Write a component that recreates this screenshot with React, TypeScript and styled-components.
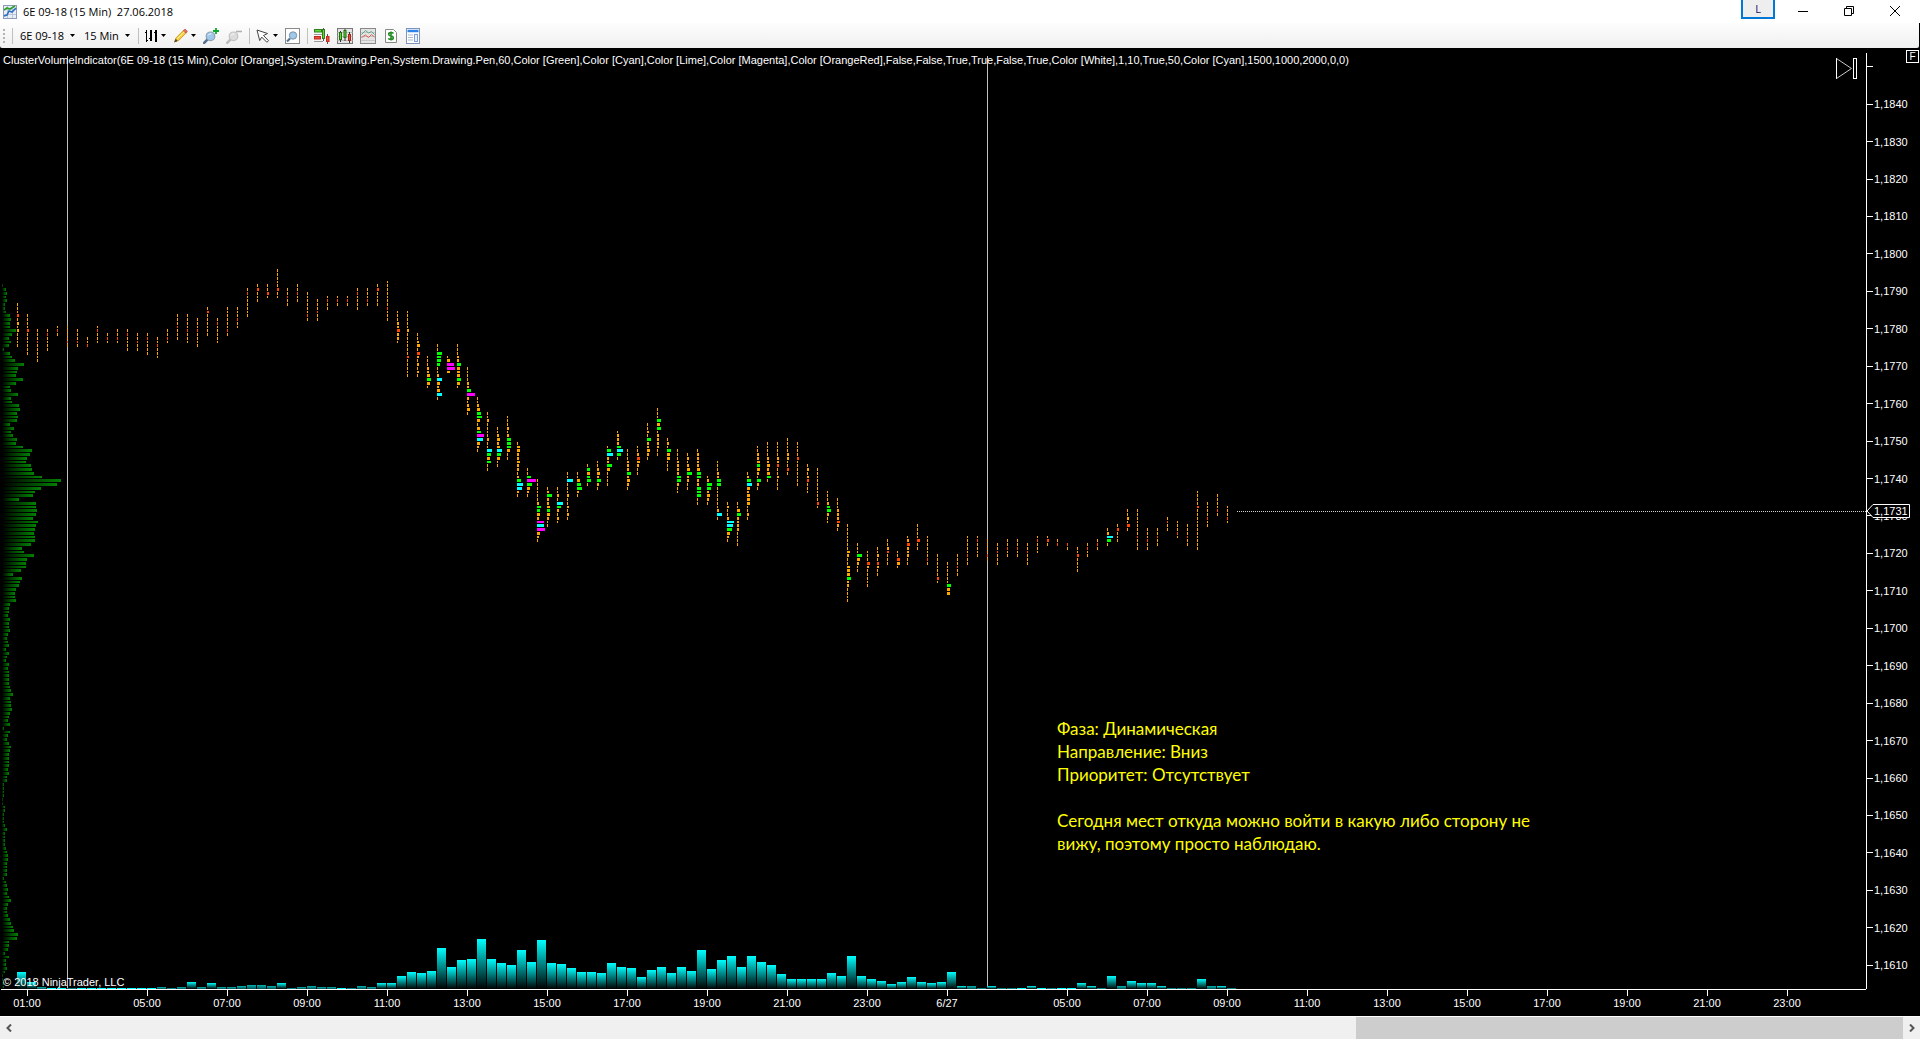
import React from "react";
import styled, { createGlobalStyle } from "styled-components";

const GlobalStyle = createGlobalStyle`
  * { box-sizing: border-box; }
  html, body, #root { height: 100%; }
  body { margin: 0; background: #000; overflow: hidden; }
  button, select { font: inherit; color: inherit; }
`;

const UI_FONT = `"Open Sans", "Noto Sans", sans-serif`;
const NOTE_FONT = `Lato, "Open Sans", sans-serif`;
const CHART_FONT = `"Liberation Sans", Arial, sans-serif`;

/* ---------- chart data ---------- */

const COLUMN_START = 17;
const COLUMN_STEP = 10;
const ROW_ORIGIN = 236;
const ROW_STEP = 3.75;

const CELLS: Record<string, [string, number]> = {
  "1": ["#ffa500", 1],
  "2": ["#ffa500", 2],
  "3": ["#ffa500", 3],
  a: ["#ff4500", 1],
  b: ["#ff4500", 2],
  c: ["#ff4500", 3],
  d: ["#00ff00", 3],
  e: ["#00ff00", 4],
  f: ["#00ff00", 5],
  p: ["#00ffff", 5],
  q: ["#00ffff", 6],
  r: ["#00ffff", 7],
  v: ["#ff00ff", 7],
  w: ["#ff00ff", 8],
  x: ["#ff00ff", 9],
};

/* first price row of each bar, then one symbol per row */
const CLUSTERS: [number, string][] = [
  [5, "111b12121111"], [8, "1111b111111"], [12, "111a11111"], [12, "1a1111"], [11, "1a1"],
  [11, "1111a1"], [12, "111a1"], [14, "11a"], [11, "1a111"], [13, "1a1"],
  [12, "11a1"], [12, "1a1111"], [13, "11a11"], [13, "1a1111"], [14, "11a111"],
  [12, "11a1"], [8, "111a111"], [8, "1111a111"], [9, "111a1111"], [6, "1b111111"],
  [9, "1a11111"], [6, "111111a1"], [6, "111a11"], [1, "1a111111"], [0, "1b111"],
  [0, "11b1"], [-4, "11111b11"], [1, "11a11"], [0, "11a11"], [2, "111111a1"],
  [4, "111a11"], [3, "1a11"], [3, "1a1"], [3, "1a1"], [1, "1a1111"],
  [1, "111a1"], [0, "1b1111"], [-1, "1111111a111"], [7, "11122c221"], [7, "111112111111b11111"],
  [13, "11231c212121"], [19, "111223e31"], [16, "11feed112p323p1"], [19, "13vw3"], [16, "11122e333e31"],
  [22, "111122ew21231"], [30, "1123ef313evq321"], [34, "1121111211pe3e11"], [38, "112323pe311"], [35, "111212eee311"],
  [42, "1332232212eqp21"], [49, "11exf321"], [52, "1111112ed32vrw321"], [54, "12f223d3211"], [54, "1121qe2121"],
  [50, "11q1112112121"], [50, "113ef21"], [48, "1d3de1"], [47, "11232e21"], [43, "1eq22f31111"],
  [39, "1222eqe1"], [44, "111222e2321"], [43, "112c3211"], [37, "1121e22321"], [33, "111e3e1222211"],
  [41, "121e33111"], [44, "1112222ee211"], [45, "12123f2211"], [44, "122223ee22eee11"], [51, "12fe2321"],
  [47, "11122ee1111112p1"], [58, "12112rqf321"], [58, "113e22221111"], [50, "12ep323331121"], [43, "11223d321e21"],
  [42, "111122323e1"], [42, "111122b112111"], [41, "11112211b1"], [42, "1111b1111111"], [48, "1212b111"],
  [49, "111111111b1"], [55, "1112de211"], [57, "111222c21"], [64, "11111113211333e221111"], [69, "111f3211"],
  [71, "111c211111"], [70, "1121b211"], [68, "112b111"], [71, "11c31"], [67, "12c22211"],
  [64, "1111c11"], [67, "111111a1"], [72, "111111b1"], [74, "111111e33"], [72, "111a11"],
  [67, "11111a11"], [67, "1a1111"], [68, "1111a1"], [69, "11a111"], [68, "11a11"],
  [68, "11a11"], [69, "11a111"], [67, "1a111"], [67, "1b1"], [68, "1a"],
  [69, "a1"], [70, "11b1111"], [69, "1a11"], [68, "1a1"], [65, "12qe1"],
  [64, "1b111"], [60, "1121c1"], [60, "1111111a111"], [65, "111a11"], [65, "11a11"],
  [62, "1a11"], [63, "111a1"], [64, "111a11"], [55, "1111b11111111111"], [58, "1111a11"],
  [56, "1111a1"], [59, "111a1"],
];

/* bar heights; a negative value is drawn in the darker shade */
const VOLUME = [
  17, 7, -2, 1, 1, -1, 1, 1, 1, 1, 1, 1, 1, 1, -2, -1, -2, 7, -2, 6, -2, -2, -3, -4, -4, -3, 6, -1, -2, -3,
  -2, -2, 1, -1, -3, -2, 6, 6, 13, 17, 16, 18, 41, 22, 29, 30, 50, 30, 26, 24, 39, 27, 49, 26, 25, 21, 17,
  17, 16, 26, 22, 21, 12, 19, 22, 16, 22, 18, 39, 20, 29, 33, 22, 33, 27, 24, 15, 10, 10, 10, 10, 16, 13,
  33, 13, 10, 8, 5, 7, 12, 7, 6, 7, 17, 3, -3, -1, 3, -1, -1, 1, 3, 1, -1, 1, 1, 6, 3, -1, 13, -3, 8, 6,
  6, 3, -1, -1, -1, 10, -3, 3, -1,
];

const PROFILE = [
  1, 4, 5, 4, 5, 3, 3, 4, 8, 9, 8, 8, 14, 10, 7, 9, 7, 2, 8, 10, 13, 22, 16, 15, 14, 21, 14, 8, 9, 16, 9, 10,
  17, 18, 15, 16, 15, 8, 12, 9, 11, 15, 14, 21, 30, 28, 25, 24, 29, 30, 32, 40, 59, 55, 39, 33, 31, 17, 34,
  34, 35, 34, 31, 36, 34, 33, 32, 33, 33, 29, 20, 22, 32, 25, 24, 24, 19, 11, 20, 18, 17, 14, 13, 13, 14, 8,
  7, 7, 6, 8, 7, 7, 8, 6, 5, 6, 7, 4, 7, 5, 4, 7, 6, 7, 7, 7, 7, 8, 9, 11, 8, 9, 9, 10, 8, 7, 6, 8, 2, 8, 6,
  5, 7, 9, 8, 7, 7, 7, 7, 6, 7, 5, 5, 2, 2, 2, 2, 1, 1, 3, 3, 2, 2, 2, 3, 5, 3, 3, 3, 3, 4, 5, 6, 6, 5, 5,
  5, 5, 2, 4, 5, 6, 5, 7, 9, 6, 5, 5, 6, 8, 9, 11, 12, 16, 15, 7, 7, 6, 3, 7, 4, 4, 5, 3, 1, 1, 2, 2,
];

const PRICES = ["", ...Array.from({ length: 24 }, (_, i) => `1,${1840 - i * 10}`)];

const TIMES: { label: string; gap?: boolean }[] = [
  { label: "01:00" }, { label: "05:00", gap: true }, { label: "07:00" }, { label: "09:00" },
  { label: "11:00" }, { label: "13:00" }, { label: "15:00" }, { label: "17:00" }, { label: "19:00" },
  { label: "21:00" }, { label: "23:00" }, { label: "6/27" }, { label: "05:00", gap: true },
  { label: "07:00" }, { label: "09:00" }, { label: "11:00" }, { label: "13:00" }, { label: "15:00" },
  { label: "17:00" }, { label: "19:00" }, { label: "21:00" }, { label: "23:00" },
];

const rowTop = (n: number) => ROW_ORIGIN + Math.ceil(ROW_STEP * n);
const rowHeight = (n: number) => rowTop(n + 1) - rowTop(n) - 1;
const columnLeft = (k: number) => COLUMN_START + COLUMN_STEP * k;

/* ---------- window frame ---------- */

const Window = styled.div`
  display: flex;
  flex-direction: column;
  height: 100vh;
  font-family: ${UI_FONT};
  font-size: 11px;
  color: #000;
`;

const TitleBar = styled.header`
  display: flex;
  align-items: center;
  flex: none;
  height: 23px;
  padding: 0 2px 0 3px;
  background: #fff;
`;

const Title = styled.h1`
  flex: 1;
  margin: 0 0 0 6px;
  font-size: 11px;
  line-height: 22px;
  font-weight: 400;
  white-space: pre;
`;

const LanguageButton = styled.button`
  align-self: flex-start;
  width: 34px;
  height: 19px;
  padding: 0;
  border: 2px solid #0078d7;
  border-top: 0;
  background: #eee;
  color: #10106a;
  line-height: 16px;
`;

const WindowControls = styled.div`
  display: flex;
  align-self: stretch;
  margin-left: 5px;
`;

const WindowButton = styled.button`
  display: flex;
  align-items: center;
  justify-content: center;
  width: 46px;
  padding: 0 0 2px;
  border: 0;
  background: none;
`;

/* ---------- toolbar ---------- */

const ToolbarFrame = styled.div`
  flex: none;
  background: #000;
`;

const Toolbar = styled.div`
  display: flex;
  align-items: center;
  height: 25px;
  padding-left: 3px;
  margin-right: 1px;
  background: linear-gradient(#fdfdfd, #f0f0f0);
  border-radius: 0 0 2px 2px;
`;

const Grip = styled.div`
  width: 2px;
  height: 14px;
  margin-right: 7px;
  background: repeating-linear-gradient(#b4b4b4 0 2px, transparent 2px 4px);
`;

const Separator = styled.div`
  width: 1px;
  height: 16px;
  margin-right: 6px;
  background: #c0c0c0;
`;

const Picker = styled.label`
  display: flex;
  align-items: center;
  gap: 6px;
  padding: 0 8px 0 1px;
`;

const PickerSelect = styled.select`
  appearance: none;
  padding: 0;
  border: 0;
  background: none;
  line-height: 18px;
  outline: none;
`;

const ToolButton = styled.button`
  display: flex;
  align-items: center;
  gap: 3px;
  height: 20px;
  margin-right: 7px;
  padding: 0;
  border: 0;
  background: none;
`;

/* ---------- chart ---------- */

const Chart = styled.main`
  display: grid;
  grid-template-columns: minmax(0, 1fr) 54px;
  grid-template-rows: minmax(0, 1fr) 27px;
  flex: 1;
  min-height: 0;
  background: #000;
  color: #fff;
  font-family: ${CHART_FONT};
  font-size: 11px;
`;

const Plot = styled.section`
  position: relative;
  overflow: hidden;
`;

const PlotSvg = styled.svg`
  display: block;
  width: 100%;
  height: 100%;
`;

const IndicatorLabel = styled.div`
  position: absolute;
  top: 4px;
  left: 3px;
  line-height: 16px;
  white-space: nowrap;
`;

const Copyright = styled.div`
  position: absolute;
  left: 3px;
  bottom: 0;
  line-height: 13px;
`;

const Note = styled.div`
  position: absolute;
  left: 1057px;
  top: 669px;
  width: 500px;
  color: #ff0;
  font-family: ${NOTE_FONT};
  font-size: 17px;
  line-height: 23px;
`;

const NoteLine = styled.p`
  margin: 0;
`;

const NoteText = styled.p`
  margin: 23px 0 0;
`;

const JumpButton = styled.button`
  position: absolute;
  top: 10px;
  right: 8px;
  display: flex;
  padding: 0;
  border: 0;
  background: none;
`;

const PriceAxis = styled.aside`
  position: relative;
  background: linear-gradient(#fff, #fff) 0 5px / 1px 100% no-repeat;
`;

const PriceList = styled.ol`
  display: flex;
  flex-direction: column;
  height: 100%;
  margin: 0;
  padding: 0 0 5px;
  list-style: none;
`;

const PriceRow = styled.li`
  display: flex;
  align-items: center;
  gap: 1px;
  flex: 1;
  min-height: 0;

  &::before {
    content: "";
    width: 7px;
    height: 1px;
    background: #fff;
  }
`;

const FixButton = styled.button`
  position: absolute;
  top: 2px;
  right: 1px;
  width: 13px;
  height: 13px;
  padding: 0;
  border: 1px solid #fff;
  background: #000;
  font-size: 10px;
  line-height: 11px;
`;

const PriceTag = styled.div`
  position: absolute;
  top: 456px;
  left: 0;
  width: 44px;
  height: 14px;
  padding-left: 8px;
  line-height: 14px;
`;

const PriceTagShape = styled.svg`
  position: absolute;
  top: 0;
  left: 0;
`;

const PriceTagValue = styled.output`
  position: relative;
  display: block;
`;

const TimeAxis = styled.ol`
  display: flex;
  margin: 0 0 0 1px;
  padding: 0;
  border-top: 1px solid #fff;
  overflow: hidden;
  list-style: none;

  & > :first-child {
    margin-left: -14px;
  }
`;

const TimeLabel = styled.li<{ $gap?: boolean }>`
  display: flex;
  flex-direction: column;
  align-items: center;
  flex: 0 0 80px;
  margin-left: ${(p) => (p.$gap ? 40 : 0)}px;
  line-height: 14px;

  &::before {
    content: "";
    width: 1px;
    height: 6px;
    background: #fff;
  }
`;

/* ---------- scroll bar ---------- */

const ScrollBar = styled.footer`
  display: flex;
  flex: none;
  height: 24px;
  border-top: 1px solid #fff;
  border-bottom: 1px solid #fff;
  background: #f0f0f0;
`;

const ScrollArrow = styled.button`
  display: flex;
  align-items: center;
  justify-content: center;
  width: 17px;
  padding: 0;
  border: 0;
  background: none;
`;

const ScrollTrack = styled.div`
  display: flex;
  justify-content: flex-end;
  flex: 1;
`;

const ScrollThumb = styled.div`
  width: 29%;
  background: #cdcdcd;
`;

/* ---------- icons ---------- */

const Caret = () => (
  <svg width="5" height="3" viewBox="0 0 5 3" aria-hidden="true">
    <path d="M0 0h5L2.500 3z" fill="#000" />
  </svg>
);

const AppIcon = () => (
  <svg width="14" height="14" viewBox="0 0 14 14" aria-hidden="true">
    <rect x=".5" y=".5" width="13" height="13" fill="#e8eef6" stroke="#8d9db5" />
    <path d="M4.500 1v12M9.500 1v12M1 4.500h12M1 9.500h12" stroke="#b9c7da" />
    <path d="M1 5l3-2 3 1 5-3" fill="none" stroke="#2fa12f" strokeWidth="1.600" />
    <path d="M1 11l3-1 2-4 3 1 4-4" fill="none" stroke="#2f6fc4" strokeWidth="1.600" />
  </svg>
);

const BarsIcon = () => (
  <svg width="13" height="14" viewBox="0 0 13 14" shapeRendering="crispEdges" aria-hidden="true">
    <path d="M1 1h1v12H1zM0 3h1v1H0zM5 1h2v11H5zM10 1h2v12h-2zM4 9h1v1H4zM9 3h1v1H9zM2 11h1v1H2z" fill="#000" />
  </svg>
);

const PencilIcon = () => (
  <svg width="15" height="16" viewBox="0 0 16 16" aria-hidden="true">
    <path d="M2 14l1.200-4L11 2.200l2.800 2.800L6 12.800z" fill="#f7cf3c" stroke="#b98a1d" strokeWidth=".8" />
    <path d="M11 2.200l1.200-1.100q.8-.6 1.600.2l1 1q.8.8.2 1.500L13.800 5z" fill="#e46b5c" stroke="#a84337" strokeWidth=".6" />
    <path d="M1 15l1.900-4 2.200 2.200z" fill="#5a4322" />
    <path d="M4.500 11L12 3.500" stroke="#fff0a8" />
  </svg>
);

const Lens = ({ rim, glass, handle }: { rim: string; glass: string; handle: string }) => (
  <>
    <path d="M4.800 11.200L1.200 14.800" stroke={handle} strokeWidth="2.600" strokeLinecap="round" />
    <circle cx="7.500" cy="8.300" r="4.300" fill={glass} stroke={rim} strokeWidth="1.200" />
    <path d="M5 7.500Q6 5.500 8.500 5.800" fill="none" stroke="#fff" strokeOpacity=".8" />
  </>
);

const ZoomInIcon = () => (
  <svg width="16" height="16" viewBox="0 0 16 16" aria-hidden="true">
    <Lens rim="#8ba0b4" glass="#9fc8ea" handle="#53708f" />
    <path d="M13 0v6M10 3h6" stroke="#0ca92f" strokeWidth="1.800" />
  </svg>
);

const ZoomOutIcon = () => (
  <svg width="16" height="16" viewBox="0 0 16 16" aria-hidden="true">
    <Lens rim="#c2c2c2" glass="#dcdcdc" handle="#bcbcbc" />
    <path d="M10 3.500h6" stroke="#b0b0b0" strokeWidth="1.600" />
  </svg>
);

const CursorIcon = () => (
  <svg width="14" height="14" viewBox="0 0 14 14" aria-hidden="true">
    <path d="M1 1l10.500 3.500-4 2 5 5.200-1.600 1.600-5.200-5.200-2 3.500z" fill="#fff" stroke="#444" />
  </svg>
);

const FindIcon = () => (
  <svg width="15" height="16" viewBox="0 0 15 16" aria-hidden="true">
    <rect x=".5" y=".5" width="14" height="15" fill="#fff" stroke="#8a8a8a" />
    <path d="M5 10.500l-3 3" stroke="#53708f" strokeWidth="2.200" />
    <circle cx="8" cy="7.500" r="3.700" fill="#9fc8ea" stroke="#7c92a8" />
  </svg>
);

const DomIcon = () => (
  <svg width="16" height="16" viewBox="0 0 16 16" aria-hidden="true">
    <rect x=".5" y="1.500" width="7" height="2.500" fill="#5fd83a" stroke="#2f7d1c" />
    <path d="M0 6.500h9M0 13.500h9" stroke="#999" />
    <rect x=".5" y="8.500" width="6" height="2.500" fill="#ee4b3f" stroke="#c22a20" />
    <path d="M9.500 0v13M13.500 6v10" stroke="#555" />
    <rect x="8.500" y="1.500" width="2" height="9" fill="#5fd83a" stroke="#2f7d1c" />
    <rect x="12.500" y="8.500" width="2.500" height="5" fill="#ee4b3f" stroke="#c22a20" />
  </svg>
);

const CandlesIcon = () => (
  <svg width="16" height="16" viewBox="0 0 16 16" aria-hidden="true">
    <rect x=".5" y=".5" width="15" height="15" fill="#e4e4e4" stroke="#777" />
    <path d="M.5 4.500h15M.5 8.500h15M.5 12.500h15" stroke="#bbb" />
    <path d="M3.500 3v11M8 1v12M12.500 4v11" stroke="#333" />
    <rect x="2.500" y="4.500" width="2" height="7" fill="#5fd83a" stroke="#246b14" />
    <rect x="7" y="2.500" width="2" height="7" fill="#5fd83a" stroke="#246b14" />
    <rect x="11.500" y="6.500" width="2" height="6" fill="#ee4b3f" stroke="#a3261c" />
  </svg>
);

const IndicatorIcon = () => (
  <svg width="16" height="16" viewBox="0 0 16 16" aria-hidden="true">
    <rect x=".5" y=".5" width="15" height="15" fill="#e3e3e3" stroke="#8a8a8a" />
    <path d="M1 4.500h14M1 8.500h14M1 12.500h14" stroke="#c6c6c6" />
    <path d="M1.500 6.500l4-4 3 2.500 3-1.500 3 3" fill="none" stroke="#58a884" />
    <path d="M1.500 9.500l4-2.500 3 2.500 3-3 3 2.500" fill="none" stroke="#dd5a50" />
  </svg>
);

const StrategyIcon = () => (
  <svg width="16" height="14" viewBox="-2 0 16 14" aria-hidden="true">
    <path d="M.5.500h8l3 3v10H.5z" fill="#fff" stroke="#888" />
    <path
      d="M8.500 4.500Q7.500 3.500 6 3.500 3.600 3.600 3.700 5.300 3.900 6.700 6 7 8.300 7.300 8.300 8.900 8.200 10.500 6 10.500 4.300 10.500 3.300 9.400M6 2.500v9"
      fill="none"
      stroke="#268c26"
      strokeWidth="1.600"
    />
  </svg>
);

const PropertiesIcon = () => (
  <svg width="14" height="16" viewBox="0 0 14 16" aria-hidden="true">
    <rect x=".5" y=".5" width="13" height="15" fill="#fff" stroke="#7f93b8" />
    <path d="M1.500 3h11" stroke="#2c83ea" strokeWidth="2.500" />
    <path d="M2 7h5M2 9.500h5M2 12h5" stroke="#a9b5c8" />
    <rect x="8.500" y="6.500" width="3" height="7" fill="#e9f0fa" stroke="#7ba0dd" />
  </svg>
);

/* ---------- chart layers ---------- */

const VolumeProfile = () => (
  <g>
    {PROFILE.map((w, n) => (
      <rect key={n} x={2} y={rowTop(n)} width={w} height={rowHeight(n)} fill="url(#profileFill)" />
    ))}
  </g>
);

const VolumeBars = () => (
  <g>
    {VOLUME.map((v, k) => {
      const h = Math.abs(v);
      const fill = h === 1 ? (v < 0 ? "#008080" : "#00ffff") : v < 0 ? "url(#volumeDim)" : "url(#volumeFill)";
      return <rect key={k} x={columnLeft(k)} y={941 - h} width={9} height={h} fill={fill} />;
    })}
  </g>
);

const Clusters = () => (
  <g>
    {CLUSTERS.map(([start, rows], k) =>
      rows.split("").map((symbol, i) => {
        const [fill, width] = CELLS[symbol];
        const n = start + i;
        return (
          <rect key={`${k}-${n}`} x={columnLeft(k)} y={rowTop(n)} width={width} height={rowHeight(n)} fill={fill} />
        );
      }),
    )}
  </g>
);

export default function App() {
  return (
    <Window>
      <GlobalStyle />
      <TitleBar>
        <AppIcon />
        <Title>{"6E 09-18 (15 Min)  27.06.2018"}</Title>
        <LanguageButton type="button">L</LanguageButton>
        <WindowControls>
          <WindowButton type="button" aria-label="Minimize">
            <svg width="10" height="10" viewBox="0 0 10 10"><path d="M0 5.500h10" stroke="#000" /></svg>
          </WindowButton>
          <WindowButton type="button" aria-label="Restore">
            <svg width="10" height="10" viewBox="0 0 10 10">
              <path d="M.5 2.500h7v7h-7zM2.500 2.500v-2h7v7h-2" fill="none" stroke="#000" />
            </svg>
          </WindowButton>
          <WindowButton type="button" aria-label="Close">
            <svg width="10" height="10" viewBox="0 0 10 10"><path d="M0 0l10 10M10 0L0 10" stroke="#000" /></svg>
          </WindowButton>
        </WindowControls>
      </TitleBar>

      <ToolbarFrame>
        <Toolbar role="toolbar" aria-label="Chart">
          <Grip />
          <Separator />
          <Picker>
            <PickerSelect aria-label="Instrument"><option>6E 09-18</option></PickerSelect>
            <Caret />
          </Picker>
          <Picker>
            <PickerSelect aria-label="Interval"><option>15 Min</option></PickerSelect>
            <Caret />
          </Picker>
          <Separator />
          <ToolButton type="button" aria-label="Chart style"><BarsIcon /><Caret /></ToolButton>
          <ToolButton type="button" aria-label="Drawing tools"><PencilIcon /><Caret /></ToolButton>
          <ToolButton type="button" aria-label="Zoom in"><ZoomInIcon /></ToolButton>
          <ToolButton type="button" aria-label="Zoom out"><ZoomOutIcon /></ToolButton>
          <Separator />
          <ToolButton type="button" aria-label="Cursor"><CursorIcon /><Caret /></ToolButton>
          <ToolButton type="button" aria-label="Data box"><FindIcon /></ToolButton>
          <Separator />
          <ToolButton type="button" aria-label="Chart trader"><DomIcon /></ToolButton>
          <ToolButton type="button" aria-label="Data series"><CandlesIcon /></ToolButton>
          <ToolButton type="button" aria-label="Indicators"><IndicatorIcon /></ToolButton>
          <ToolButton type="button" aria-label="Strategies"><StrategyIcon /></ToolButton>
          <ToolButton type="button" aria-label="Properties"><PropertiesIcon /></ToolButton>
        </Toolbar>
      </ToolbarFrame>

      <Chart>
        <Plot>
          <PlotSvg shapeRendering="crispEdges" aria-hidden="true">
            <defs>
              <linearGradient id="profileFill">
                <stop offset="0" stopColor="#000" />
                <stop offset="1" stopColor="#008000" />
              </linearGradient>
              <linearGradient id="volumeFill" x2="0" y2="1">
                <stop offset="0" stopColor="#00ffff" />
                <stop offset="1" stopColor="#000" />
              </linearGradient>
              <linearGradient id="volumeDim" x2="0" y2="1">
                <stop offset="0" stopColor="#00b4b4" />
                <stop offset="1" stopColor="#005050" />
              </linearGradient>
            </defs>
            <VolumeProfile />
            <rect x="67" y="8" width="1" height="100%" fill="#c0c0c0" />
            <rect x="987" y="8" width="1" height="100%" fill="#c0c0c0" />
            <VolumeBars />
            <Clusters />
            <line x1="1237" y1="463.500" x2="100%" y2="463.500" stroke="#d3d3d3" strokeDasharray="1 1" />
          </PlotSvg>
          <IndicatorLabel>
            ClusterVolumeIndicator(6E 09-18 (15 Min),Color [Orange],System.Drawing.Pen,System.Drawing.Pen,60,Color
            [Green],Color [Cyan],Color [Lime],Color [Magenta],Color
            [OrangeRed],False,False,True,True,False,True,Color [White],1,10,True,50,Color
            [Cyan],1500,1000,2000,0,0)
          </IndicatorLabel>
          <Note>
            <NoteLine>Фаза: Динамическая</NoteLine>
            <NoteLine>Направление: Вниз</NoteLine>
            <NoteLine>Приоритет: Отсутствует</NoteLine>
            <NoteText>
              Сегодня мест откуда можно войти в какую либо сторону не
              <br />
              вижу, поэтому просто наблюдаю.
            </NoteText>
          </Note>
          <Copyright>© 2018 NinjaTrader, LLC</Copyright>
          <JumpButton type="button" aria-label="Scroll to last bar">
            <svg width="22" height="21" viewBox="0 0 22 21">
              <path d="M.5 0v21" stroke="#fff" />
              <path d="M.5.500L15.500 10.500.5 20.500" fill="none" stroke="#c8c8c8" />
              <rect x="17.500" y=".5" width="3" height="20" fill="none" stroke="#fff" />
            </svg>
          </JumpButton>
        </Plot>

        <PriceAxis>
          <PriceList>
            {PRICES.map((price, i) => (
              <PriceRow key={i}>{price}</PriceRow>
            ))}
          </PriceList>
          <FixButton type="button">F</FixButton>
          <PriceTag>
            <PriceTagShape width="44" height="14" viewBox="0 0 44 14" aria-hidden="true">
              <path d="M1 7L7 .5h36.500v13H7z" fill="#000" stroke="#fff" />
            </PriceTagShape>
            <PriceTagValue>1,1731</PriceTagValue>
          </PriceTag>
        </PriceAxis>

        <TimeAxis>
          {TIMES.map((t, i) => (
            <TimeLabel key={i} $gap={t.gap}>
              {t.label}
            </TimeLabel>
          ))}
        </TimeAxis>
      </Chart>

      <ScrollBar>
        <ScrollArrow type="button" aria-label="Scroll left">
          <svg width="6" height="8" viewBox="0 0 6 8"><path d="M5 .5L1.500 4 5 7.500" fill="none" stroke="#555" strokeWidth="2" /></svg>
        </ScrollArrow>
        <ScrollTrack>
          <ScrollThumb />
        </ScrollTrack>
        <ScrollArrow type="button" aria-label="Scroll right">
          <svg width="6" height="8" viewBox="0 0 6 8"><path d="M1 .5L4.500 4 1 7.500" fill="none" stroke="#555" strokeWidth="2" /></svg>
        </ScrollArrow>
      </ScrollBar>
    </Window>
  );
}
